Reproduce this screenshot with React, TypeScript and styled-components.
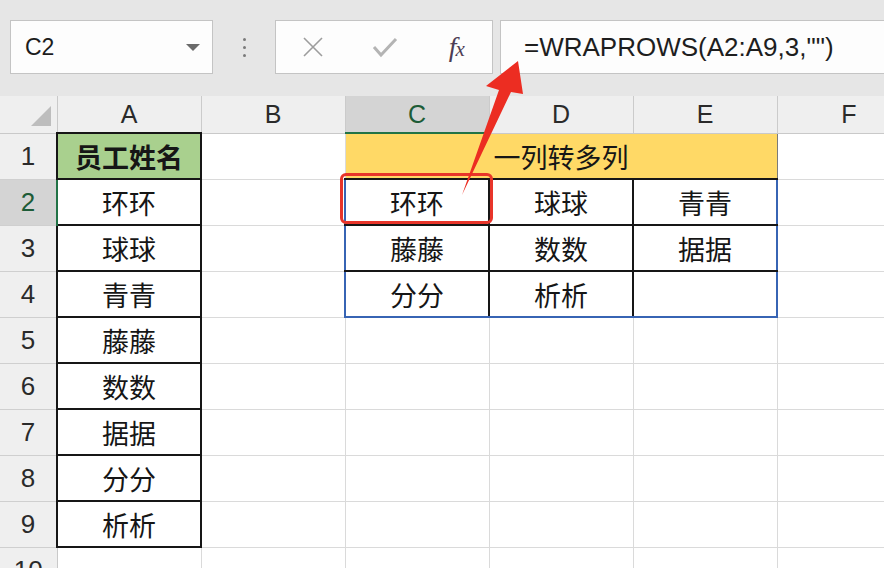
import React from 'react'
import styled, { createGlobalStyle } from 'styled-components'

const GlobalStyle = createGlobalStyle`
  html, body {
    margin: 0;
    padding: 0;
    background: #fff;
    overflow: hidden;
  }
  body {
    font-family: 'Liberation Sans', 'Noto Sans CJK SC', sans-serif;
  }
`

const GRID = '1px solid #dadada'
const BLACK = '2px solid #161616'
const BLUE = '2px solid #3764b4'
const GREEN = '2px solid #217346'

const Page = styled.div`
  position: relative;
  width: 884px;
  height: 568px;
  overflow: hidden;
  background: #fff;
`

const Toolbar = styled.div`
  height: 96px;
  box-sizing: border-box;
  padding: 20px 0 0 10px;
  background: #e6e6e6;
  display: flex;
  align-items: flex-start;
`

const Box = styled.div<{ $w?: number }>`
  box-sizing: border-box;
  height: 54px;
  width: ${(p) => (p.$w ? `${p.$w}px` : 'auto')};
  flex: ${(p) => (p.$w ? 'none' : '1')};
  margin-right: ${(p) => (p.$w ? '0' : '-4px')};
  background: #fdfdfd;
  border: 1px solid #c4c4c4;
  display: flex;
  align-items: center;
`

const NameBox = styled(Box)`
  justify-content: space-between;
  padding: 0 12px 0 14px;
  font-size: 23px;
  color: #1c1c1c;
`

const Caret = styled.span`
  width: 0;
  height: 0;
  border-left: 7px solid transparent;
  border-right: 7px solid transparent;
  border-top: 7px solid #6a6a6a;
`

const Dots = styled.div`
  width: 62px;
  height: 54px;
  display: flex;
  flex-direction: column;
  align-items: center;
  justify-content: center;
  gap: 5px;
`

const Dot = styled.span`
  width: 3px;
  height: 3px;
  border-radius: 50%;
  background: #7a7a7a;
`

const IconBox = styled(Box)`
  padding-left: 1px;
  margin-right: 7px;
`

const IconSlot = styled.div`
  width: 72px;
  display: flex;
  justify-content: center;
  align-items: center;
`

const Fx = styled.span`
  font-family: 'Liberation Serif', serif;
  font-style: italic;
  font-size: 28px;
  line-height: 1;
  color: #4d3d55;
  letter-spacing: -1px;
  & > small {
    font-size: 21px;
  }
`

const FormulaBox = styled(Box)`
  padding-left: 23px;
  font-size: 26px;
  color: #1e1e1e;
  white-space: nowrap;
`

const SheetWrap = styled.div`
  width: 884px;
  overflow: hidden;
`

const Sheet = styled.table`
  border-collapse: collapse;
  table-layout: fixed;
  width: 921px;
`

const HeadRow = styled.tr`
  height: 37px;
`

const Row = styled.tr`
  height: 46px;
`

const Corner = styled.th`
  background: #efefef;
  border-right: 1px solid #c9c9c9;
  border-bottom: 1px solid #c9c9c9;
  padding: 0;
  vertical-align: bottom;
  & svg {
    display: block;
    margin: 0 6px 7px auto;
  }
`

const ColHead = styled.th<{ $active?: boolean }>`
  padding: 0;
  font-weight: normal;
  font-size: 25px;
  color: ${(p) => (p.$active ? '#1d5c37' : '#2a2a2a')};
  background: ${(p) => (p.$active ? '#d4d4d4' : '#efefef')};
  border-left: 1px solid #cbcbcb;
  border-right: 1px solid #cbcbcb;
  border-bottom: ${(p) => (p.$active ? GREEN : '1px solid #c9c9c9')};
`

const RowHead = styled.th<{ $active?: boolean }>`
  padding: 0;
  font-weight: normal;
  font-size: 26px;
  color: ${(p) => (p.$active ? '#1d5c37' : '#2a2a2a')};
  background: ${(p) => (p.$active ? '#d4d4d4' : '#efefef')};
  border-top: 1px solid #cfcfcf;
  border-bottom: 1px solid #cfcfcf;
  border-right: ${(p) => (p.$active ? GREEN : '1px solid #c9c9c9')};
`

type Edges = { t?: string; r?: string; b?: string; l?: string }

const Cell = styled.td<{ $bg?: string; $bold?: boolean; $e?: Edges }>`
  padding: 0;
  text-align: center;
  vertical-align: middle;
  font-family: 'Noto Sans CJK SC', 'Liberation Sans', sans-serif;
  font-size: 27px;
  font-weight: ${(p) => (p.$bold ? 700 : 400)};
  color: #161616;
  background: ${(p) => p.$bg ?? '#fff'};
  border-top: ${(p) => p.$e?.t ?? GRID};
  border-right: ${(p) => p.$e?.r ?? GRID};
  border-bottom: ${(p) => p.$e?.b ?? GRID};
  border-left: ${(p) => p.$e?.l ?? GRID};
  white-space: nowrap;
`

const RedBox = styled.div`
  position: absolute;
  left: 340px;
  top: 173px;
  width: 153px;
  height: 51px;
  box-sizing: border-box;
  border: 3px solid #e8352a;
  border-radius: 6px;
  pointer-events: none;
`

const Arrow = styled.svg`
  position: absolute;
  left: 0;
  top: 0;
  pointer-events: none;
`

const cols = ['A', 'B', 'C', 'D', 'E', 'F']
const names = ['环环', '球球', '青青', '藤藤', '数数', '据据', '分分', '析析']
const spill = [
  ['环环', '球球', '青青'],
  ['藤藤', '数数', '据据'],
  ['分分', '析析', ''],
]
const boxed: Edges = { t: BLACK, r: BLACK, b: BLACK, l: BLACK }

const spillEdges = (r: number, c: number): Edges => ({
  t: BLACK,
  l: c === 0 ? BLUE : BLACK,
  r: c === 2 ? BLUE : BLACK,
  b: r === 2 ? BLUE : BLACK,
})

export default function App() {
  return (
    <Page>
      <GlobalStyle />
      <Toolbar>
        <NameBox $w={203}>
          <span>C2</span>
          <Caret />
        </NameBox>
        <Dots>
          <Dot />
          <Dot />
          <Dot />
        </Dots>
        <IconBox $w={218}>
          <IconSlot>
            <svg width="22" height="22" viewBox="0 0 22 22">
              <path d="M2 2 L20 20 M20 2 L2 20" stroke="#9d9d9d" strokeWidth="1.6" fill="none" />
            </svg>
          </IconSlot>
          <IconSlot>
            <svg width="26" height="22" viewBox="0 0 26 22">
              <path d="M2 11 L9 19 L24 3" stroke="#b4b4b4" strokeWidth="3" fill="none" />
            </svg>
          </IconSlot>
          <IconSlot>
            <Fx>
              f<small>x</small>
            </Fx>
          </IconSlot>
        </IconBox>
        <FormulaBox>=WRAPROWS(A2:A9,3,"")</FormulaBox>
      </Toolbar>

      <SheetWrap>
        <Sheet>
          <colgroup>
            <col style={{ width: 57 }} />
            {cols.map((c) => (
              <col key={c} style={{ width: 144 }} />
            ))}
          </colgroup>
          <tbody>
            <HeadRow>
              <Corner>
                <svg width="20" height="20" viewBox="0 0 20 20">
                  <polygon points="20,0 20,20 0,20" fill="#bdbdbd" />
                </svg>
              </Corner>
              {cols.map((c) => (
                <ColHead key={c} $active={c === 'C'}>
                  {c}
                </ColHead>
              ))}
            </HeadRow>
            <Row>
              <RowHead>1</RowHead>
              <Cell $bg="#a9d08e" $bold $e={boxed}>
                员工姓名
              </Cell>
              <Cell />
              <Cell
                colSpan={3}
                $bg="#ffd966"
                $e={{ t: '1px solid #7a7a7a', l: '1px solid #7a7a7a', r: '1px solid #7a7a7a', b: BLACK }}
              >
                一列转多列
              </Cell>
              <Cell />
            </Row>
            {names.map((n, i) => {
              const r = i + 2
              const s = i < 3 ? spill[i] : null
              return (
                <Row key={r}>
                  <RowHead $active={r === 2}>{r}</RowHead>
                  <Cell $e={boxed}>{n}</Cell>
                  <Cell />
                  {s
                    ? s.map((v, c) => (
                        <Cell key={c} $e={spillEdges(i, c)}>
                          {v}
                        </Cell>
                      ))
                    : [0, 1, 2].map((c) => <Cell key={c} />)}
                  <Cell />
                </Row>
              )
            })}
            <Row>
              <RowHead>10</RowHead>
              {cols.map((c) => (
                <Cell key={c} />
              ))}
            </Row>
          </tbody>
        </Sheet>
      </SheetWrap>

      <RedBox />
      <Arrow width="884" height="568" viewBox="0 0 884 568">
        <polygon
          points="462,195 499,90 486,86 518,61 523,94 511,92"
          fill="#ec2d22"
        />
      </Arrow>
    </Page>
  )
}
